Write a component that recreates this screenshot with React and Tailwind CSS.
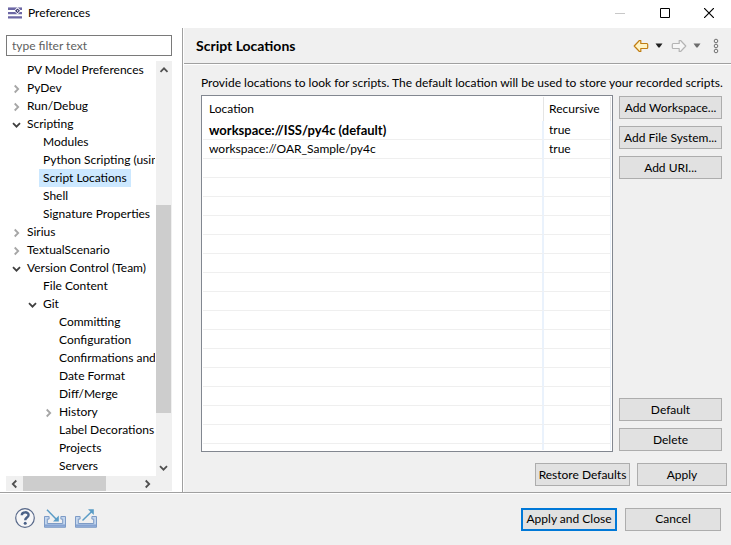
import React from "react";

const tree = [
  { label: "PV Model Preferences", level: 0 },
  { label: "PyDev", level: 0, state: "closed" },
  { label: "Run/Debug", level: 0, state: "closed" },
  { label: "Scripting", level: 0, state: "open" },
  { label: "Modules", level: 1 },
  { label: "Python Scripting (using Py4C)", level: 1 },
  { label: "Script Locations", level: 1, selected: true },
  { label: "Shell", level: 1 },
  { label: "Signature Properties", level: 1 },
  { label: "Sirius", level: 0, state: "closed" },
  { label: "TextualScenario", level: 0, state: "closed" },
  { label: "Version Control (Team)", level: 0, state: "open" },
  { label: "File Content", level: 1 },
  { label: "Git", level: 1, state: "open" },
  { label: "Committing", level: 2 },
  { label: "Configuration", level: 2 },
  { label: "Confirmations and Warnings", level: 2 },
  { label: "Date Format", level: 2 },
  { label: "Diff/Merge", level: 2 },
  { label: "History", level: 2, state: "closed" },
  { label: "Label Decorations", level: 2 },
  { label: "Projects", level: 2 },
  { label: "Servers", level: 2 },
];

const indents = ["pl-1", "pl-5", "pl-9"];

const locations = [
  { path: "workspace://ISS/py4c (default)", recursive: "true", bold: true },
  { path: "workspace://OAR_Sample/py4c", recursive: "true" },
];

const emptyRows = Array.from({ length: 15 }, (_, i) => i);

function Chevron({ dir, className = "" }) {
  const paths = {
    up: "M1.5 6.8 5 3.3l3.5 3.5",
    down: "M1 3.2 4.5 6.7 8 3.2",
    left: "M6.3 1.5 2.8 5l3.5 3.5",
    right: "M2.7 1.5 6.2 5 2.7 8.5",
  };
  return (
    <svg viewBox="0 0 10 10" className={"size-[10px] " + className} fill="none" stroke="currentColor" strokeWidth="1.8" aria-hidden="true">
      <path d={paths[dir]} />
    </svg>
  );
}

function TreeItem({ item }) {
  return (
    <li className={"flex h-[18px] items-center " + indents[item.level]}>
      <span className="flex w-[13px] shrink-0 pt-px">
        {item.state === "closed" && <Chevron dir="right" className="ml-[2px] text-[#a6a6a6]" />}
        {item.state === "open" && <Chevron dir="down" className="ml-[2px] text-[#404040]" />}
      </span>
      <span className={"h-[18px] px-1 leading-[18px] whitespace-nowrap " + (item.selected ? "bg-[#cce8ff]" : "")}>
        {item.label}
      </span>
    </li>
  );
}

function Button({ className = "", primary = false, children }) {
  return (
    <button
      type="button"
      className={
        "flex h-[23px] items-center justify-center bg-[#e1e1e1] whitespace-nowrap " +
        (primary ? "border-2 border-[#0078d7] " : "border border-[#adadad] ") +
        className
      }
    >
      {children}
    </button>
  );
}

function Arrow({ flip = false, stroke, fill }) {
  return (
    <svg viewBox="0 0 16 14" className={"h-[14px] w-4 " + (flip ? "-scale-x-100" : "")} aria-hidden="true">
      <path d="M1.2 7 6.4 1.5h1.4v3h6c.5 0 .9.3.9.9v3.2c0 .6-.4.9-.9.9h-6v3H6.4z" fill={fill} stroke={stroke} strokeWidth="1.2" strokeLinejoin="round" />
    </svg>
  );
}

function Caret({ color }) {
  return (
    <svg viewBox="0 0 8 5" className="h-[5px] w-2" aria-hidden="true">
      <path d="M.5.4h7L4.6 4.4H3.4z" fill={color} />
    </svg>
  );
}

function TrayIcon({ out = false }) {
  return (
    <svg viewBox="0 0 22 20" className="h-5 w-[22px]" fill="none" aria-hidden="true">
      <path d="M.5 8.5V19.3h21V8.5h-4.6v2.6h1.8v4.4H3.3v-4.4h1.8V8.5z" fill="#c3d6ee" stroke="#7d9bc6" strokeWidth="1" />
      <path d="M1 17.6h20" stroke="#86a3d2" strokeWidth="2.4" />
      {out ? (
        <>
          <path d="M7.5 12.5 17 3.2" stroke="#5a9cc6" strokeWidth="1.5" />
          <path d="M13 1.2h5.8V7z" fill="#5a9cc6" />
        </>
      ) : (
        <>
          <path d="M3 1.8 13 12" stroke="#5a9cc6" strokeWidth="1.5" />
          <path d="M14.8 7.6v5.8H9z" fill="#5a9cc6" />
        </>
      )}
    </svg>
  );
}

function TitleBar() {
  return (
    <header className="flex h-7 items-center bg-white pb-[3px] pl-2">
      <svg viewBox="0 0 14 12" className="h-3 w-[14px]" aria-hidden="true">
        <path d="M0 1h14v2H0zM0 4.9h14v2.4H0zM0 9.2h14v2.4H0z" fill="#6c67a5" />
        <path d="M0 .5h14" stroke="#aaa7cb" strokeWidth="1" />
        <path d="M9.5 0 13 3.8 9.5 7.4 6 3.8z" fill="#fff" />
        <path d="M9.5 1.4 12 3.8 9.5 6.2 7 3.8z" fill="#3d386f" />
        <path d="M9 3.2h1.2v1.2H9z" fill="#fff" />
      </svg>
      <h1 className="ml-[6px] flex-1">Preferences</h1>
      <div className="flex">
        <button type="button" aria-label="Minimize" className="flex w-[46px] justify-center text-[#c8c8c8]">
          <svg viewBox="0 0 10 10" className="size-[10px]"><path d="M0 5.5h10" stroke="currentColor" /></svg>
        </button>
        <button type="button" aria-label="Maximize" className="flex w-[44px] justify-center">
          <svg viewBox="0 0 10 10" className="size-[10px]"><path d="M.5.5h9v9h-9z" fill="none" stroke="currentColor" /></svg>
        </button>
        <button type="button" aria-label="Close" className="flex w-11 justify-center">
          <svg viewBox="0 0 10 10" className="size-[10px]"><path d="m0 0 10 10M10 0 0 10" stroke="currentColor" strokeWidth="1.2" /></svg>
        </button>
      </div>
    </header>
  );
}

function Sidebar() {
  return (
    <aside className="flex w-[183px] shrink-0 flex-col border-r border-[#a0a0a0] bg-white pt-[7px] pr-[10px] pl-[6px]">
      <input
        type="text"
        aria-label="Filter preferences"
        placeholder="type filter text"
        className="mb-[5px] h-[21px] w-full border border-[#7a7a7a] bg-white px-[5px] placeholder:text-[#606060] focus:outline-none"
      />
      <div className="flex flex-1">
        <nav aria-label="Preference pages" className="min-w-0 flex-1 overflow-hidden pr-px">
          <ul className="overflow-hidden">
            {tree.map((item) => (
              <TreeItem key={item.label} item={item} />
            ))}
          </ul>
        </nav>
        <div className="flex w-4 flex-col bg-[#f0f0f0] text-[#505050]">
          <button type="button" aria-label="Scroll up" className="flex h-[17px] items-center justify-center"><Chevron dir="up" /></button>
          <div className="mt-[127px] mr-px h-[208px] bg-[#cdcdcd]" />
          <div className="flex-1" />
          <button type="button" aria-label="Scroll down" className="flex h-[17px] items-center justify-center"><Chevron dir="down" /></button>
        </div>
      </div>
      <div className="mb-px flex h-[15px] items-center bg-[#f0f0f0] pr-4 text-[#505050]">
        <button type="button" aria-label="Scroll left" className="flex w-[17px] justify-center"><Chevron dir="left" /></button>
        <div className="h-full w-[83px] bg-[#cdcdcd]" />
        <div className="flex-1" />
        <button type="button" aria-label="Scroll right" className="flex w-[17px] justify-center"><Chevron dir="right" /></button>
      </div>
    </aside>
  );
}

function LocationsTable() {
  const pathCell = "border-r-2 border-[#eaf2fc] p-0 pl-[6px]";
  const flagCell = "border-r border-[#eaf2fc] p-0 pl-[5px]";
  return (
    <div className="min-w-0 flex-1 border border-[#828790] bg-white p-px">
      <table className="w-full table-fixed border-separate border-spacing-0 text-left">
        <colgroup>
          <col />
          <col className="w-[67px]" />
        </colgroup>
        <thead>
          <tr className="h-6">
            <th className="border-r border-[#e5e5e5] p-0 pl-[6px] font-normal">Location</th>
            <th className="border-r border-[#e5e5e5] p-0 pl-[5px] font-normal">Recursive</th>
          </tr>
        </thead>
        <tbody className="leading-[18px]">
          {locations.map((row) => (
            <tr key={row.path} className="h-[19px]">
              <td className={pathCell + " border-b border-b-[#efefef] " + (row.bold ? "text-[13px] font-bold" : "")}>{row.path}</td>
              <td className={flagCell + " border-b border-b-[#efefef]"}>{row.recursive}</td>
            </tr>
          ))}
          {emptyRows.map((i) => (
            <tr key={i} className="h-[19px]">
              <td className={pathCell + " border-b border-b-[#efefef]"} />
              <td className={flagCell + " border-b border-b-[#efefef]"} />
            </tr>
          ))}
          <tr className="h-[6px]">
            <td className={pathCell} />
            <td className={flagCell} />
          </tr>
        </tbody>
      </table>
    </div>
  );
}

function Page() {
  return (
    <main className="flex min-w-0 flex-1 flex-col border-l border-white">
      <div className="flex h-9 items-center border-b border-[#a0a0a0] pr-3 pl-3">
        <h2 className="flex-1 pt-px text-[14px] font-bold">Script Locations</h2>
        <div className="flex items-center">
          <button type="button" aria-label="Back"><Arrow stroke="#c17d11" fill="#fff3c4" /></button>
          <button type="button" aria-label="Back history" className="ml-[6px]"><Caret color="#202020" /></button>
          <button type="button" aria-label="Forward" className="ml-2"><Arrow flip stroke="#b4b4b4" fill="#f6f6f6" /></button>
          <button type="button" aria-label="Forward history" className="ml-[6px]"><Caret color="#6d6d6d" /></button>
          <button type="button" aria-label="View menu" className="ml-3">
            <svg viewBox="0 0 6 16" className="h-4 w-[6px]" fill="none" stroke="#707070" aria-hidden="true">
              <circle cx="3" cy="3" r="1.8" />
              <circle cx="3" cy="8" r="1.8" />
              <circle cx="3" cy="13" r="1.8" />
            </svg>
          </button>
        </div>
      </div>
      <div className="flex flex-1 flex-col border-t border-white pr-1 pb-[6px] pl-[17px]">
        <p className="mt-[9px] mb-[3px] leading-[18px] whitespace-nowrap">
          Provide locations to look for scripts. The default location will be used to store your recorded scripts.
        </p>
        <div className="flex flex-1 gap-[6px] pr-[5px]">
          <LocationsTable />
          <div className="flex w-[103px] flex-col gap-[7px] pt-px pb-px">
            <Button>Add Workspace...</Button>
            <Button>Add File System...</Button>
            <Button>Add URI...</Button>
            <div className="flex-1" />
            <Button>Default</Button>
            <Button>Delete</Button>
          </div>
        </div>
        <div className="mt-[11px] flex justify-end gap-[7px]">
          <Button className="w-[95px]">Restore Defaults</Button>
          <Button className="w-[90px]">Apply</Button>
        </div>
      </div>
    </main>
  );
}

export default function App() {
  return (
    <div className="flex min-h-screen flex-col bg-[#f0f0f0] font-[Lato,sans-serif] text-[12px] leading-4 text-black">
      <TitleBar />
      <div className="flex flex-1">
        <Sidebar />
        <Page />
      </div>
      <footer className="border-t border-[#a0a0a0]">
        <div className="flex h-[52px] items-center border-t border-white pr-[10px] pb-px pl-[15px]">
          <div className="flex flex-1 items-center gap-[9px] pb-[2px]">
            <button type="button" aria-label="Help">
              <svg viewBox="0 0 20 20" className="size-5" fill="none" aria-hidden="true">
                <circle cx="10" cy="10" r="9.3" fill="#f6f6f7" stroke="#58698a" strokeWidth="1.2" />
                <path d="M6.8 7.2C6.8 3.4 13.6 3.4 13.6 7c0 2.5-3.4 2.6-3.4 5.2" stroke="#4a6187" strokeWidth="2.4" />
                <circle cx="10.2" cy="15.2" r="1.5" fill="#4a6187" />
              </svg>
            </button>
            <button type="button" aria-label="Import"><TrayIcon /></button>
            <button type="button" aria-label="Export"><TrayIcon out /></button>
          </div>
          <div className="flex gap-2">
            <Button primary className="w-24">Apply and Close</Button>
            <Button className="w-24">Cancel</Button>
          </div>
        </div>
      </footer>
    </div>
  );
}
